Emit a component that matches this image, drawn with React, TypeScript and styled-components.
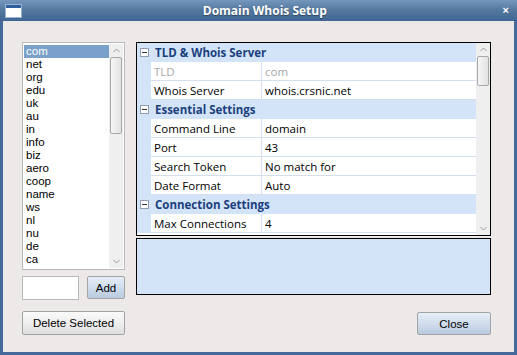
import React from "react";
import styled, { createGlobalStyle } from "styled-components";

const Global = createGlobalStyle`
  html, body { margin: 0; padding: 0; background: #ece9e8; }
  * { box-sizing: border-box; }
`;

const Window = styled.div`
  width: 517px;
  height: 355px;
  display: flex;
  flex-direction: column;
  background: #ece9e8;
  font-family: "Liberation Sans", Arial, sans-serif;
`;

const TitleBar = styled.div`
  height: 22px;
  display: flex;
  align-items: center;
  padding: 0 8px 0 6px;
  background: linear-gradient(#7597bd 0%, #55799f 45%, #3f6592 100%);
  color: #fff;
`;

const TitleIcon = styled.div`
  width: 15px;
  height: 12px;
  background: #fff;
  border-top: 3px solid #2f5f9c;
  box-shadow: 0 0 0 1px #9bb4d1;
`;

const Title = styled.div`
  flex: 1;
  text-align: center;
  font-family: "Open Sans", "DejaVu Sans", sans-serif;
  font-weight: 700;
  font-size: 12px;
  text-shadow: 0 1px 1px rgba(0, 0, 0, 0.4);
  padding-left: 6px;
`;

const CloseX = styled.div`
  font-size: 11px;
  font-weight: 700;
  line-height: 1;
`;

const Body = styled.div`
  flex: 1;
  display: flex;
  gap: 11px;
  padding: 21px 23px 17px 19px;
  border-left: 3px solid #45699a;
  border-right: 3px solid #45699a;
  border-bottom: 3px solid #45699a;
`;

const LeftCol = styled.div`
  width: 103px;
  display: flex;
  flex-direction: column;
`;

const ListBox = styled.div`
  height: 228px;
  display: flex;
  background: #fff;
  border: 1px solid #b9b9b9;
  padding: 1px;
`;

const ListItems = styled.div`
  flex: 1;
  display: flex;
  flex-direction: column;
  padding-top: 1px;
`;

const ListItem = styled.div<{ $selected?: boolean }>`
  height: 13px;
  line-height: 13px;
  font-size: 11.5px;
  padding-left: 2px;
  color: ${(p) => (p.$selected ? "#fff" : "#000")};
  background: ${(p) => (p.$selected ? "#7aa1c9" : "transparent")};
`;

const VScroll = styled.div<{ $w: number }>`
  width: ${(p) => p.$w}px;
  display: flex;
  flex-direction: column;
  background: #efefef;
`;

const ScrollArrow = styled.div`
  height: 13px;
  display: flex;
  align-items: center;
  justify-content: center;
`;

const ScrollThumb = styled.div<{ $h: number }>`
  height: ${(p) => p.$h}px;
  margin: 0 1px;
  border: 1px solid #a9a9a9;
  border-radius: 2px;
  background: linear-gradient(90deg, #f6f6f6, #e2e2e2);
`;

const ScrollTrack = styled.div`
  flex: 1;
`;

const InputRow = styled.div`
  display: flex;
  justify-content: space-between;
  margin-top: 6px;
  height: 24px;
`;

const TextInput = styled.div`
  width: 57px;
  height: 24px;
  background: #fff;
  border: 1px solid #b9b9b9;
`;

const Button = styled.div<{ $w: number; $h: number; $blue?: boolean }>`
  width: ${(p) => p.$w}px;
  height: ${(p) => p.$h}px;
  display: flex;
  align-items: center;
  justify-content: center;
  font-size: 11.5px;
  color: #000;
  border: 1px solid #a3a3a3;
  border-radius: 2px;
  background: ${(p) =>
    p.$blue
      ? "linear-gradient(#e6eef7 0%, #d0dded 50%, #b9cbe0 100%)"
      : "linear-gradient(#fafafa 0%, #efefef 50%, #dedede 100%)"};
`;

const DeleteWrap = styled.div`
  margin-top: 11px;
`;

const RightCol = styled.div`
  flex: 1;
  display: flex;
  flex-direction: column;
`;

const Grid = styled.div`
  height: 194px;
  border: 1px solid #000;
  display: flex;
  background: #fff;
  overflow: hidden;
`;

const GridRows = styled.div`
  flex: 1;
  display: flex;
  flex-direction: column;
  font-family: "Open Sans", "Noto Sans", sans-serif;
  font-size: 11.5px;
`;

const CategoryRow = styled.div`
  height: 19px;
  display: flex;
  align-items: center;
  background: #d4e4f8;
  color: #1a3f7c;
  font-weight: 700;
  padding-left: 3px;
  border-bottom: 1px solid #d4e4f8;
`;

const Minus = styled.div`
  width: 9px;
  height: 9px;
  border: 1px solid #8e9db0;
  background: #fff;
  display: flex;
  align-items: center;
  justify-content: center;
  margin-right: 6px;
  &::after {
    content: "";
    width: 5px;
    height: 1px;
    background: #333;
  }
`;

const PropRow = styled.div<{ $disabled?: boolean }>`
  height: 19px;
  display: flex;
  color: ${(p) => (p.$disabled ? "#a8a8a8" : "#000")};
`;

const Margin = styled.div`
  width: 14px;
  background: #d4e4f8;
`;

const Cell = styled.div<{ $w?: number }>`
  ${(p) => (p.$w ? `width: ${p.$w}px;` : "flex: 1;")}
  display: flex;
  align-items: center;
  padding-left: 3px;
  border-bottom: 1px solid #d3dfee;
  ${(p) => (p.$w ? "border-right: 1px solid #d3dfee;" : "")}
  white-space: nowrap;
`;

const Description = styled.div`
  margin-top: 2px;
  height: 57px;
  border: 1px solid #000;
  background: #d4e4f8;
`;

const CloseRow = styled.div`
  margin-top: auto;
  display: flex;
  justify-content: flex-end;
`;

const Arrow = ({ up }: { up?: boolean }) => (
  <svg width="7" height="5" viewBox="0 0 7 5">
    <polyline
      points={up ? "0.5,4 3.5,1 6.5,4" : "0.5,1 3.5,4 6.5,1"}
      fill="none"
      stroke="#9a9a9a"
      strokeWidth="1"
    />
  </svg>
);

const tlds = [
  "com", "net", "org", "edu", "uk", "au", "in", "info", "biz",
  "aero", "coop", "name", "ws", "nl", "nu", "de", "ca",
];

type Item =
  | { kind: "cat"; label: string }
  | { kind: "prop"; name: string; value: string; disabled?: boolean };

const rows: Item[] = [
  { kind: "cat", label: "TLD & Whois Server" },
  { kind: "prop", name: "TLD", value: "com", disabled: true },
  { kind: "prop", name: "Whois Server", value: "whois.crsnic.net" },
  { kind: "cat", label: "Essential Settings" },
  { kind: "prop", name: "Command Line", value: "domain" },
  { kind: "prop", name: "Port", value: "43" },
  { kind: "prop", name: "Search Token", value: "No match for" },
  { kind: "prop", name: "Date Format", value: "Auto" },
  { kind: "cat", label: "Connection Settings" },
  { kind: "prop", name: "Max Connections", value: "4" },
];

export default function App() {
  return (
    <>
      <Global />
      <Window>
        <TitleBar>
          <TitleIcon />
          <Title>Domain Whois Setup</Title>
          <CloseX>×</CloseX>
        </TitleBar>
        <Body>
          <LeftCol>
            <ListBox>
              <ListItems>
                {tlds.map((t, i) => (
                  <ListItem key={t} $selected={i === 0}>
                    {t}
                  </ListItem>
                ))}
              </ListItems>
              <VScroll $w={14}>
                <ScrollArrow>
                  <Arrow up />
                </ScrollArrow>
                <ScrollThumb $h={77} />
                <ScrollTrack />
                <ScrollArrow>
                  <Arrow />
                </ScrollArrow>
              </VScroll>
            </ListBox>
            <InputRow>
              <TextInput />
              <Button $w={38} $h={23} $blue>
                Add
              </Button>
            </InputRow>
            <DeleteWrap>
              <Button $w={103} $h={24}>
                Delete Selected
              </Button>
            </DeleteWrap>
          </LeftCol>
          <RightCol>
            <Grid>
              <GridRows>
                {rows.map((r, i) =>
                  r.kind === "cat" ? (
                    <CategoryRow key={i}>
                      <Minus />
                      {r.label}
                    </CategoryRow>
                  ) : (
                    <PropRow key={i} $disabled={r.disabled}>
                      <Margin />
                      <Cell $w={111}>{r.name}</Cell>
                      <Cell>{r.value}</Cell>
                    </PropRow>
                  )
                )}
              </GridRows>
              <VScroll $w={14}>
                <ScrollArrow>
                  <Arrow up />
                </ScrollArrow>
                <ScrollThumb $h={30} />
                <ScrollTrack />
                <ScrollArrow>
                  <Arrow />
                </ScrollArrow>
              </VScroll>
            </Grid>
            <Description />
            <CloseRow>
              <Button $w={74} $h={23} $blue>
                Close
              </Button>
            </CloseRow>
          </RightCol>
        </Body>
      </Window>
    </>
  );
}
